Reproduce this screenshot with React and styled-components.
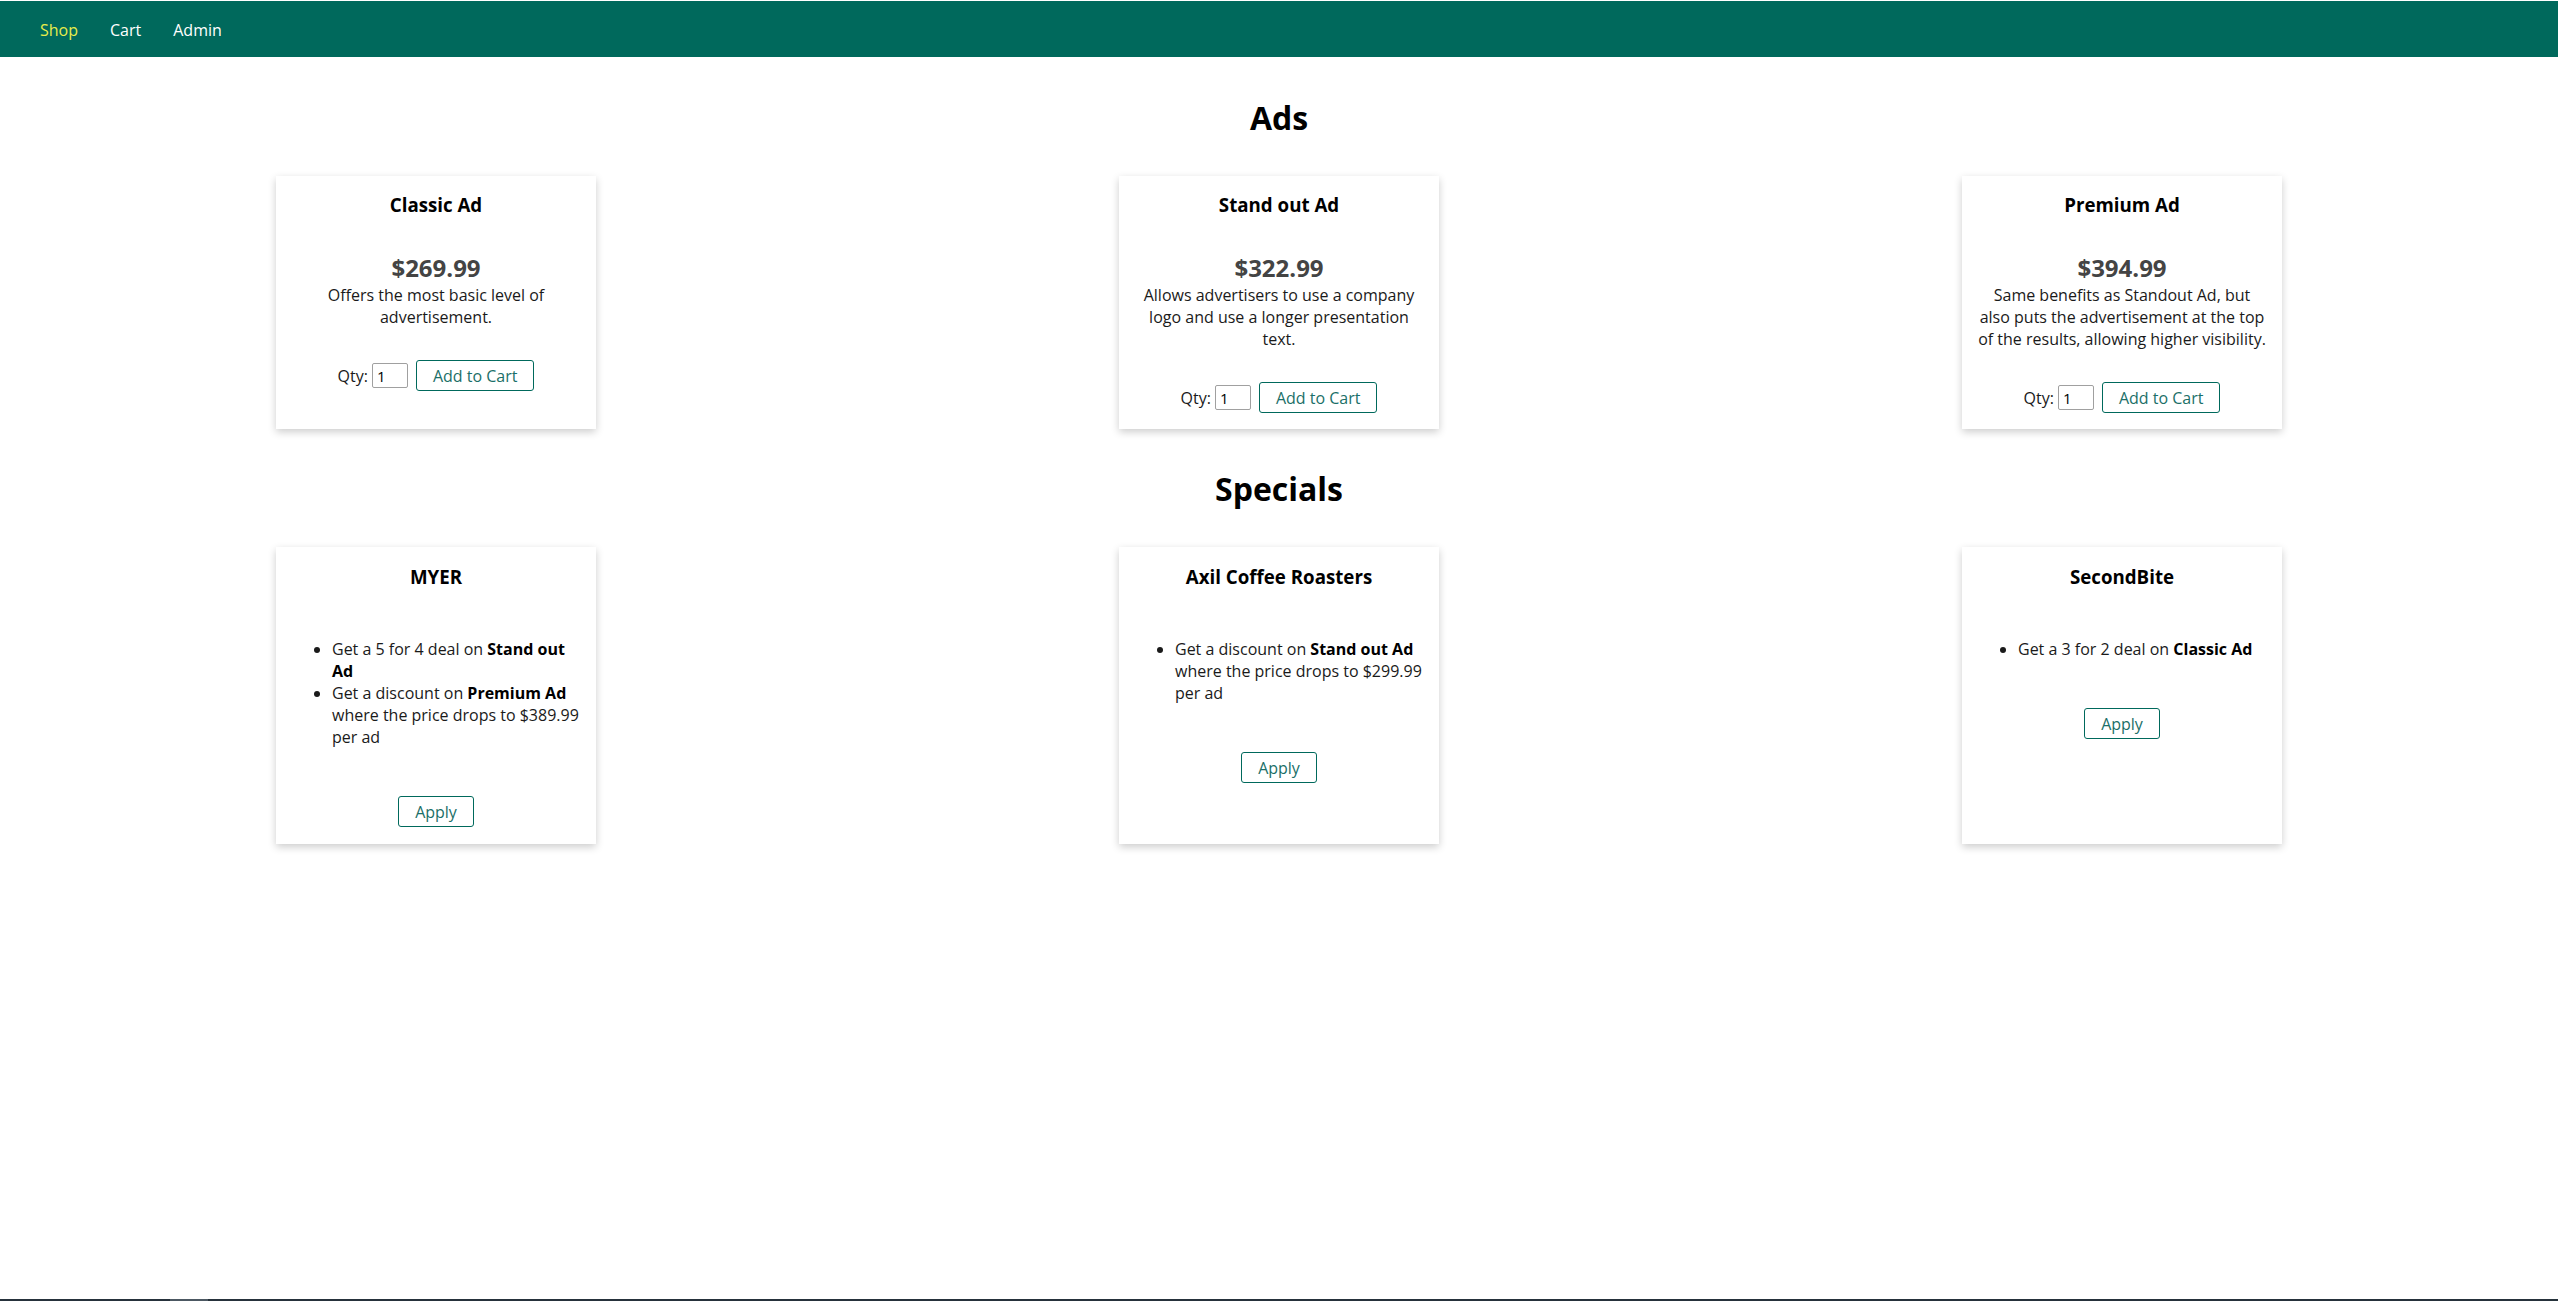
import React from "react";
import styled, { createGlobalStyle } from "styled-components";

const GlobalStyle = createGlobalStyle`
  html, body {
    margin: 0;
    padding: 0;
    background: #ffffff;
  }
  body {
    font-family: "Open Sans", "Noto Sans", sans-serif;
    color: #111;
  }
  * { box-sizing: border-box; }
`;

const Page = styled.div`
  min-height: 100vh;
  padding-top: 1px;
  display: flex;
  flex-direction: column;
`;

const NavBar = styled.nav`
  height: 56px;
  padding: 2px 0 0 24px;
  background: #00695c;
  display: flex;
  align-items: center;
`;

const NavLink = styled.a`
  font-size: 16px;
  padding: 0 16px;
  color: ${(p) => (p.$active ? "#e8ec4a" : "#ffffff")};
  text-decoration: none;
  cursor: pointer;
`;

const Main = styled.main`
  flex: 1;
  padding-top: 3px;
`;

const SectionTitle = styled.h1`
  margin: ${(p) => p.$top}px 0 36px;
  font-size: 32px;
  line-height: 44px;
  font-weight: 700;
  text-align: center;
  color: #000;
`;

const Row = styled.div`
  width: 2006px;
  margin: 0 auto;
  display: flex;
  justify-content: space-between;
  align-items: stretch;
`;

const Card = styled.div`
  width: 320px;
  padding: ${(p) => p.$pt}px 16px ${(p) => p.$pb}px;
  background: #fff;
  box-shadow: 0 3px 8px rgba(0, 0, 0, 0.2);
  text-align: center;
`;

const CardTitle = styled.h3`
  margin: 0;
  font-size: 18.72px;
  line-height: 26px;
  font-weight: 700;
  color: #000;
`;

const Price = styled.div`
  margin-top: 34px;
  font-size: 24px;
  line-height: 32px;
  font-weight: 700;
  color: #444;
`;

const Description = styled.p`
  margin: 0;
  font-size: 16px;
  line-height: 22px;
  color: #1a1a1a;
`;

const QtyRow = styled.div`
  margin-top: 32px;
  display: flex;
  justify-content: center;
  align-items: center;
  font-size: 16px;
  color: #1a1a1a;
`;

const QtyInput = styled.input`
  width: 36px;
  height: 25px;
  margin: 0 8px 0 4px;
  padding: 0 4px;
  border: 1px solid #a0a0a0;
  border-radius: 2px;
  font-family: inherit;
  font-size: 15px;
  color: #000;
`;

const OutlineButton = styled.button`
  height: 31px;
  padding: 0 16px;
  border: 1.5px solid #00695c;
  border-radius: 3px;
  background: #fff;
  color: #1b6f68;
  font-family: inherit;
  font-size: 16px;
  cursor: pointer;
`;

const DealList = styled.ul`
  margin: 48px 0;
  padding-left: 40px;
  text-align: left;
  font-size: 16px;
  line-height: 22px;
  color: #1a1a1a;
`;

const DealItem = styled.li`
  & b { font-weight: 700; color: #000; }
`;

const BottomStrip = styled.div`
  height: 2px;
  background: #26323b;
  display: flex;
`;

const StripThumb = styled.div`
  margin-left: 170px;
  width: 38px;
  background: #4c5862;
`;

const ads = [
  {
    name: "Classic Ad",
    price: "$269.99",
    desc: "Offers the most basic level of advertisement.",
  },
  {
    name: "Stand out Ad",
    price: "$322.99",
    desc: "Allows advertisers to use a company logo and use a longer presentation text.",
  },
  {
    name: "Premium Ad",
    price: "$394.99",
    desc: "Same benefits as Standout Ad, but also puts the advertisement at the top of the results, allowing higher visibility.",
  },
];

const specials = [
  {
    name: "MYER",
    deals: [
      <>Get a 5 for 4 deal on <b>Stand out Ad</b></>,
      <>Get a discount on <b>Premium Ad</b> where the price drops to $389.99 per ad</>,
    ],
  },
  {
    name: "Axil Coffee Roasters",
    deals: [
      <>Get a discount on <b>Stand out Ad</b> where the price drops to $299.99 per ad</>,
    ],
  },
  {
    name: "SecondBite",
    deals: [<>Get a 3 for 2 deal on <b>Classic Ad</b></>],
  },
];

export default function App() {
  return (
    <Page>
      <GlobalStyle />
      <NavBar>
        <NavLink $active>Shop</NavLink>
        <NavLink>Cart</NavLink>
        <NavLink>Admin</NavLink>
      </NavBar>
      <Main>
        <SectionTitle $top={36}>Ads</SectionTitle>
        <Row>
          {ads.map((ad) => (
            <Card key={ad.name} $pt={16} $pb={16}>
              <CardTitle>{ad.name}</CardTitle>
              <Price>{ad.price}</Price>
              <Description>{ad.desc}</Description>
              <QtyRow>
                Qty:
                <QtyInput type="text" defaultValue="1" />
                <OutlineButton>Add to Cart</OutlineButton>
              </QtyRow>
            </Card>
          ))}
        </Row>
        <SectionTitle $top={38}>Specials</SectionTitle>
        <Row>
          {specials.map((s) => (
            <Card key={s.name} $pt={17} $pb={17}>
              <CardTitle>{s.name}</CardTitle>
              <DealList>
                {s.deals.map((d, i) => (
                  <DealItem key={i}>{d}</DealItem>
                ))}
              </DealList>
              <OutlineButton>Apply</OutlineButton>
            </Card>
          ))}
        </Row>
      </Main>
      <BottomStrip>
        <StripThumb />
      </BottomStrip>
    </Page>
  );
}
